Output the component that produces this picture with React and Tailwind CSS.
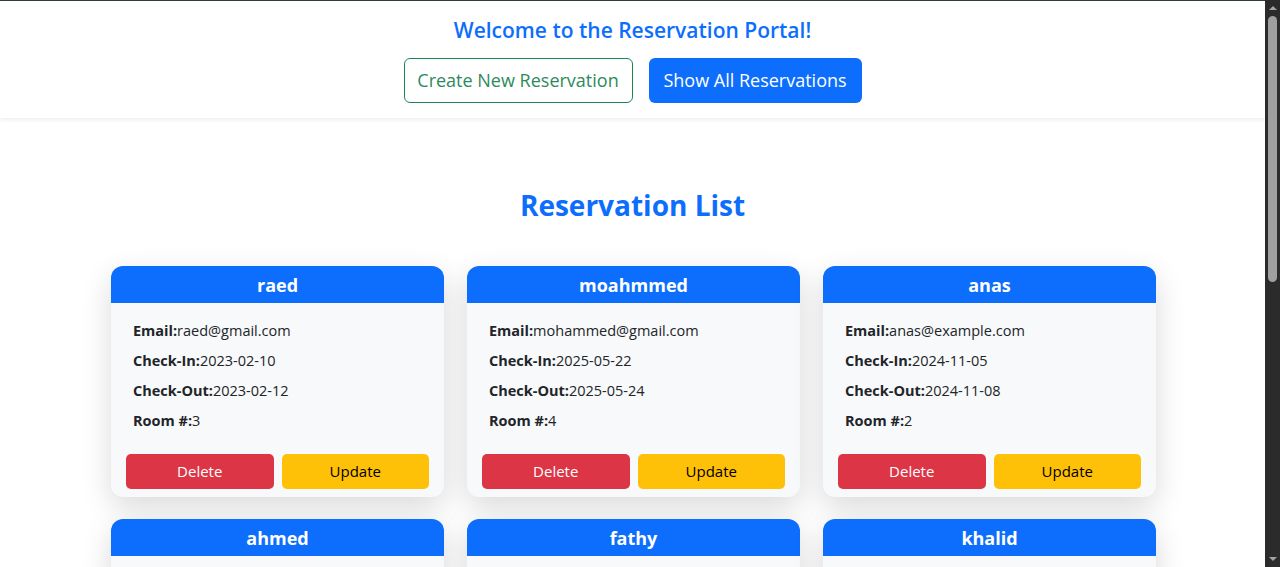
import React from 'react';

const reservations = [
    { name: 'raed', email: 'raed@gmail.com', checkIn: '2023-02-10', checkOut: '2023-02-12', room: 3 },
    { name: 'moahmmed', email: 'mohammed@gmail.com', checkIn: '2025-05-22', checkOut: '2025-05-24', room: 4 },
    { name: 'anas', email: 'anas@example.com', checkIn: '2024-11-05', checkOut: '2024-11-08', room: 2 },
    { name: 'ahmed', email: 'ahmed@gmail.com', checkIn: '2024-01-01', checkOut: '2024-01-03', room: 5 },
    { name: 'fathy', email: 'fathy@gmail.com', checkIn: '2024-03-10', checkOut: '2024-03-12', room: 6 },
    { name: 'khalid', email: 'khalid@gmail.com', checkIn: '2024-06-15', checkOut: '2024-06-18', room: 7 }
];

function ReservationCard({ r }) {
    return (
        <div className="rounded-xl bg-[#f8f9fa] shadow-[0_10px_30px_rgba(0,0,0,0.15)]">
            <div className="h-[37px] pt-[2px] rounded-t-xl bg-[#0d6efd] flex items-center justify-center text-white text-[18px] font-bold">
                {r.name}
            </div>
            <div className="pt-[17px] px-[22px] text-[14.5px] text-[#212529] leading-[22px]">
                <div className="flex flex-col gap-[8px]">
                    <p><b>Email:</b>{r.email}</p>
                    <p><b>Check-In:</b>{r.checkIn}</p>
                    <p><b>Check-Out:</b>{r.checkOut}</p>
                    <p><b>Room #:</b>{r.room}</p>
                </div>
            </div>
            <div className="flex gap-[8px] px-[15px] pt-[22px] pb-[8px]">
                <button className="flex-1 h-[35px] rounded-[5px] bg-[#dc3545] text-white text-[15px]">Delete</button>
                <button className="flex-1 h-[35px] rounded-[5px] bg-[#ffc107] text-black text-[15px]">Update</button>
            </div>
        </div>
    );
}

function Scrollbar() {
    return (
        <div className="w-[15px] h-full bg-[#2b2b2b] flex flex-col items-center">
            <div className="h-[16px] flex items-center justify-center">
                <div className="w-0 h-0 border-l-[4px] border-r-[4px] border-b-[4px] border-l-transparent border-r-transparent border-b-[#a3a3a3]" />
            </div>
            <div className="w-[9px] h-[266px] rounded-full bg-[#9f9f9f]" />
            <div className="flex-1" />
            <div className="h-[16px] flex items-center justify-center">
                <div className="w-0 h-0 border-l-[4px] border-r-[4px] border-t-[4px] border-l-transparent border-r-transparent border-t-[#a3a3a3]" />
            </div>
        </div>
    );
}

export default function App() {
    return (
        <div className="h-[567px] overflow-hidden flex bg-white font-['Open_Sans',sans-serif]">
            <div className="flex-1 overflow-hidden border-t border-[#2f3d3d]">
                {/* Header */}
                <div className="h-[117px] bg-white shadow-[0_2px_4px_rgba(0,0,0,0.07)] flex flex-col items-center pt-[14px]">
                    <h4 className="text-[21px] font-semibold text-[#0d6efd] leading-[30px]">Welcome to the Reservation Portal!</h4>
                    <div className="flex gap-[16px] mt-[13px]">
                        <button className="h-[45px] w-[229px] rounded-[6px] border border-[#198754] text-[#2e8a5c] text-[18px]">Create New Reservation</button>
                        <button className="h-[45px] w-[213px] rounded-[6px] bg-[#0d6efd] text-white text-[18px]">Show All Reservations</button>
                    </div>
                </div>

                <h2 className="text-center text-[28px] font-bold text-[#0d6efd] mt-[67px] leading-[40px]">Reservation List</h2>

                <div className="w-[1045px] ml-[111px] mt-[41px] grid grid-cols-3 gap-x-[23px] gap-y-[22px]">
                    {reservations.map((r) => (
                        <ReservationCard key={r.name} r={r} />
                    ))}
                </div>
            </div>
            <Scrollbar />
        </div>
    );
}
